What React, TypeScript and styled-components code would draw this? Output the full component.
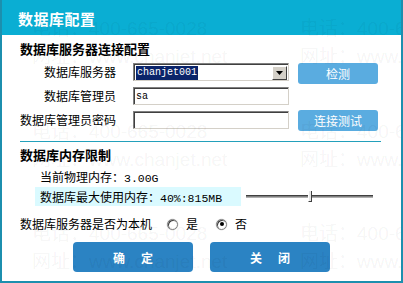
import React from "react";
import styled, { createGlobalStyle } from "styled-components";

const Global = createGlobalStyle`
  html, body { margin: 0; padding: 0; background: #fff; }
  body { width: 403px; height: 283px; overflow: hidden; }
  * { box-sizing: border-box; }
`;

const CJK = `"Noto Sans CJK SC", "Noto Sans", sans-serif`;
const MONO = `"Liberation Mono", "DejaVu Sans Mono", monospace`;

const Window = styled.div`
  position: relative;
  width: 403px;
  height: 283px;
  background: #fff;
  border: 2px solid #1c8fae;
  border-top: none;
  font-family: ${CJK};
  font-size: 12px;
  color: #000;
  overflow: hidden;
`;

const Header = styled.div`
  height: 35px;
  margin: 0 -2px;
  background: #0aaed3;
  display: flex;
  align-items: center;
  padding-left: 18px;
`;

const Title = styled.div`
  color: #fff;
  font-weight: 700;
  font-size: 15px;
  letter-spacing: 0.5px;
  line-height: 18px;
  padding-top: 2px;
`;

const Body = styled.div`
  padding: 0 20px 0 18px;
  display: flex;
  flex-direction: column;
`;

const SectionTitle = styled.div<{ $top: number }>`
  margin-top: ${(p) => p.$top}px;
  font-weight: 700;
  font-size: 13px;
  line-height: 16px;
  height: 16px;
`;

const FormGrid = styled.div`
  margin-top: 6px;
  display: grid;
  grid-template-columns: 113px 165px 80px;
  grid-template-rows: 18px 18px 18px;
  row-gap: 6px;
`;

const Label = styled.div`
  text-align: right;
  padding-right: 17px;
  line-height: 18px;
  white-space: nowrap;
`;

const Field = styled.div`
  position: relative;
  width: 156px;
  height: 18px;
  background: #fff;
  border-top: 1px solid #808080;
  border-left: 1px solid #808080;
  border-right: 1px solid #d4d0c8;
  border-bottom: 1px solid #d4d0c8;
  box-shadow: inset 1px 1px 0 #404040;
  display: flex;
  align-items: center;
  padding: 1px 1px 0 2px;
  font-family: ${MONO};
  font-size: 10px;
`;

const Selected = styled.span`
  background: #0a246a;
  color: #fff;
  height: 14px;
  line-height: 14px;
  padding: 0 1px;
`;

const DropButton = styled.div`
  margin-left: auto;
  width: 15px;
  height: 14px;
  background: #d4d0c8;
  border-top: 1px solid #fff;
  border-left: 1px solid #fff;
  border-right: 1px solid #404040;
  border-bottom: 1px solid #404040;
  display: flex;
  align-items: center;
  justify-content: center;
`;

const LightButton = styled.div<{ $shift: number }>`
  align-self: start;
  margin-top: ${(p) => p.$shift}px;
  width: 80px;
  height: 21px;
  border-radius: 3px;
  background: #5aace0;
  color: #fff;
  display: flex;
  align-items: center;
  justify-content: center;
  font-size: 12px;
`;

const Divider = styled.div`
  margin-top: 12px;
  height: 1px;
  background: #23a0bb;
`;

const InfoLine = styled.div`
  margin-top: 5px;
  padding-left: 20px;
  line-height: 18px;
  height: 18px;
`;

const Mono = styled.span`
  font-family: ${MONO};
  font-size: 11.5px;
`;

const MemoryRow = styled.div`
  margin-top: 1px;
  display: flex;
  align-items: center;
  height: 19px;
`;

const MemoryLabel = styled.div`
  margin-left: 15px;
  width: 206px;
  height: 19px;
  line-height: 19px;
  padding-left: 5px;
  background: #dafaff;
  white-space: nowrap;
`;

const Slider = styled.div`
  position: relative;
  margin-left: 5px;
  width: 127px;
  height: 12px;
`;

const Track = styled.div`
  position: absolute;
  left: 0;
  right: 0;
  top: 4px;
  height: 3px;
  background: #808080;
  border-top: 1px solid #404040;
  border-bottom: 1px solid #b0b0b0;
`;

const Thumb = styled.div`
  position: absolute;
  top: 0;
  height: 11px;
  width: 4px;
  background: #e8e8e8;
  border-left: 1px solid #fff;
  border-right: 1px solid #404040;
  border-bottom: 1px solid #404040;
`;

const RadioRow = styled.div`
  margin-top: 10px;
  display: flex;
  align-items: center;
  height: 16px;
  line-height: 16px;
`;

const RadioLabel = styled.div`
  margin-right: 15px;
`;

const RadioItem = styled.div<{ $gap: number }>`
  display: flex;
  align-items: center;
  margin-right: ${(p) => p.$gap}px;
`;

const RadioCircle = styled.div`
  width: 11px;
  height: 11px;
  border-radius: 50%;
  background: #fff;
  border: 1px solid #808080;
  box-shadow: inset 1px 1px 0 #404040, 0 0 0 0.5px #e0e0e0;
  display: flex;
  align-items: center;
  justify-content: center;
  margin-right: 8px;
`;

const Dot = styled.div`
  width: 4px;
  height: 4px;
  border-radius: 50%;
  background: #000;
`;

const ButtonBar = styled.div`
  margin-top: 10px;
  margin-left: 53px;
  display: flex;
  gap: 17px;
`;

const MainButton = styled.div`
  width: 120px;
  height: 30px;
  border-radius: 4px;
  background: #2b83c3;
  color: #fff;
  font-weight: 700;
  font-size: 12px;
  display: flex;
  align-items: center;
  justify-content: center;
  gap: 16px;
`;

const Watermark = styled.div`
  position: absolute;
  inset: 0;
  pointer-events: none;
`;

const Mark = styled.div`
  position: absolute;
  white-space: nowrap;
  font-family: "Liberation Sans", ${CJK};
  font-size: 19px;
  line-height: 22px;
  color: rgba(0, 0, 0, 0.055);
`;

const marks: [number, number, string][] = [];
for (const dy of [0, 103, 205]) {
  for (const dx of [0, 268]) {
    marks.push([30 + dx, 18 + dy, "电话：400-665-0028"]);
    marks.push([30 + dx, 46 + dy, "网址：www.chanjet.net"]);
  }
}

export default function App() {
  return (
    <>
      <Global />
      <Window>
        <Header>
          <Title>数据库配置</Title>
        </Header>
        <Body>
          <SectionTitle $top={6}>数据库服务器连接配置</SectionTitle>
          <FormGrid>
            <Label>数据库服务器</Label>
            <Field>
              <Selected>chanjet001</Selected>
              <DropButton>
                <svg width="7" height="4" viewBox="0 0 7 4">
                  <path d="M0 0H7L3.5 4Z" fill="#000" />
                </svg>
              </DropButton>
            </Field>
            <LightButton $shift={0}>检测</LightButton>
            <Label>数据库管理员</Label>
            <Field>sa</Field>
            <div />
            <Label>数据库管理员密码</Label>
            <Field />
            <LightButton $shift={-1}>连接测试</LightButton>
          </FormGrid>
          <Divider />
          <SectionTitle $top={5}>数据库内存限制</SectionTitle>
          <InfoLine>
            当前物理内存：<Mono>3.00G</Mono>
          </InfoLine>
          <MemoryRow>
            <MemoryLabel>
              数据库最大使用内存：<Mono>40%:815MB</Mono>
            </MemoryLabel>
            <Slider>
              <Track />
              <Thumb style={{ left: `${0.5 * 127 - 2}px` }} />
            </Slider>
          </MemoryRow>
          <RadioRow>
            <RadioLabel>数据库服务器是否为本机</RadioLabel>
            <RadioItem $gap={18}>
              <RadioCircle />
              是
            </RadioItem>
            <RadioItem $gap={0}>
              <RadioCircle>
                <Dot />
              </RadioCircle>
              否
            </RadioItem>
          </RadioRow>
          <ButtonBar>
            <MainButton>
              <span>确</span>
              <span>定</span>
            </MainButton>
            <MainButton>
              <span>关</span>
              <span>闭</span>
            </MainButton>
          </ButtonBar>
        </Body>
        <Watermark>
          {marks.map(([x, y, t], i) => (
            <Mark key={i} style={{ left: x, top: y }}>
              {t}
            </Mark>
          ))}
        </Watermark>
      </Window>
    </>
  );
}
